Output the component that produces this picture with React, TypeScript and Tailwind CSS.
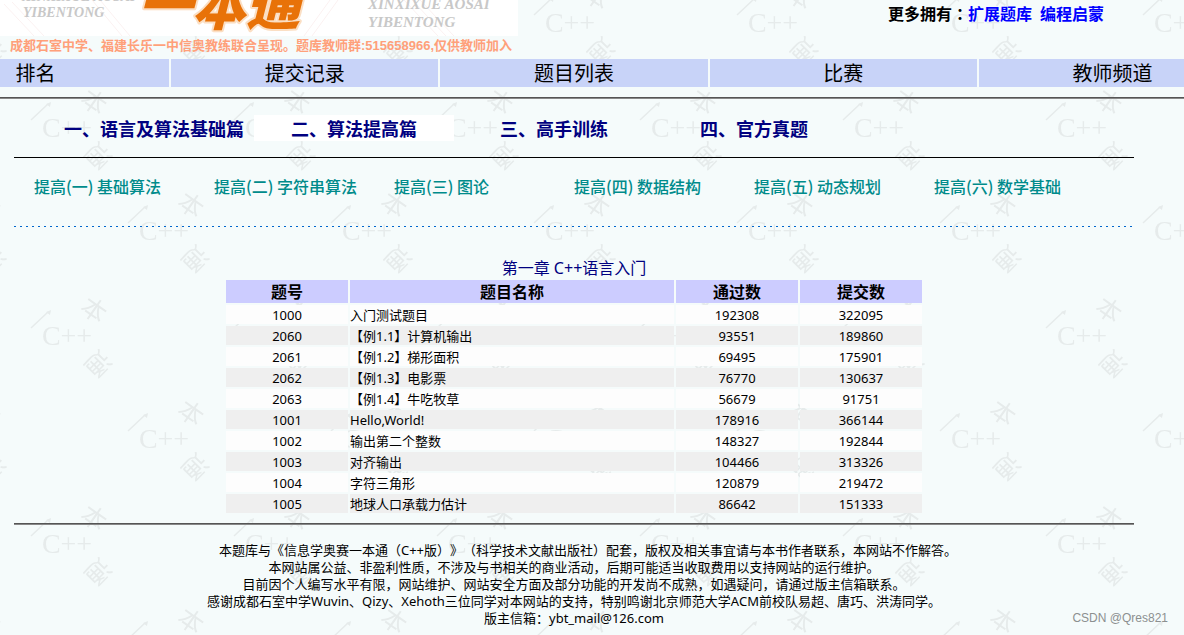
import React from 'react';

interface Problem {
  id: number;
  name: string;
  passed: number;
  submitted: number;
}

const NAV = ['排名', '提交记录', '题目列表', '比赛', '教师频道'];

const PARTS = ['一、语言及算法基础篇', '二、算法提高篇', '三、高手训练', '四、官方真题'];

const SECTIONS = [
  '提高(一) 基础算法',
  '提高(二) 字符串算法',
  '提高(三) 图论',
  '提高(四) 数据结构',
  '提高(五) 动态规划',
  '提高(六) 数学基础',
];

const PROBLEMS: Problem[] = [
  { id: 1000, name: '入门测试题目', passed: 192308, submitted: 322095 },
  { id: 2060, name: '【例1.1】计算机输出', passed: 93551, submitted: 189860 },
  { id: 2061, name: '【例1.2】梯形面积', passed: 69495, submitted: 175901 },
  { id: 2062, name: '【例1.3】电影票', passed: 76770, submitted: 130637 },
  { id: 2063, name: '【例1.4】牛吃牧草', passed: 56679, submitted: 91751 },
  { id: 1001, name: 'Hello,World!', passed: 178916, submitted: 366144 },
  { id: 1002, name: '输出第二个整数', passed: 148327, submitted: 192844 },
  { id: 1003, name: '对齐输出', passed: 104466, submitted: 313326 },
  { id: 1004, name: '字符三角形', passed: 120879, submitted: 219472 },
  { id: 1005, name: '地球人口承载力估计', passed: 86642, submitted: 151333 },
];

// One group of the tiled page background, centred on the "C++"
const Mark: React.FC<{ x: number; y: number }> = ({ x, y }) => (
  <g transform={`translate(${x} ${y})`} textAnchor="middle" fontFamily="'Noto Sans CJK SC', sans-serif">
    <path d="M-36 -8 L-19 -24" fill="none" stroke="#e6ebeb" strokeWidth="1.5" />
    <path d="M-21 -24 L-16 -26 L-17 -21 Z" />
    <text transform="translate(27 -26) rotate(35)" y="9" fontSize="25">本</text>
    <text y="9" fontSize="28" fontFamily="'Liberation Serif', serif">C++</text>
    <text transform="translate(31 28) rotate(135)" y="9" fontSize="25">通</text>
  </g>
);

const PageBackground: React.FC = () => (
  <svg className="absolute inset-0 -z-10 w-full h-full" aria-hidden="true">
    <defs>
      <pattern id="marks" width="203" height="208" patternUnits="userSpaceOnUse" fill="#e6ebeb">
        <Mark x={67} y={128} />
        <Mark x={164} y={23} />
        <Mark x={-39} y={23} />
        <Mark x={164} y={231} />
        <Mark x={-39} y={231} />
      </pattern>
    </defs>
    <rect width="100%" height="100%" fill="url(#marks)" />
  </svg>
);

const Logo: React.FC = () => (
  <svg className="block" width="518" height="36" viewBox="0 0 518 36" role="img" aria-label="一本通">
    <rect width="518" height="36" fill="#fff" />
    <g stroke="#fbf1f1" strokeWidth="1">
      <path d="M4 4 L34 36 M12 2 L44 36 M92 0 L122 36 M100 0 L130 36 M330 0 L304 36 M338 0 L312 36 M404 0 L438 36 M412 0 L446 36 M420 0 L454 36" />
    </g>
    <g fill="#c8c8c8" fontFamily="'Liberation Serif', serif" fontStyle="italic" fontWeight="700">
      <g fontSize="14">
        <text x="22" y="1">XINXIXUE AOSAI</text>
        <text x="23" y="17">YIBENTONG</text>
      </g>
      <g fontSize="15">
        <text x="368" y="9">XINXIXUE AOSAI</text>
        <text x="368" y="27">YIBENTONG</text>
      </g>
    </g>
    <text
      x="138"
      y="25"
      fontFamily="'Noto Sans CJK SC', sans-serif"
      fontSize="54"
      fontWeight="900"
      fontStyle="italic"
      fill="#e87208"
      stroke="#fbdfc4"
      strokeWidth="4"
      strokeLinejoin="round"
      paintOrder="stroke"
    >
      一本通
    </text>
  </svg>
);

const App: React.FC = () => {
  return (
    <div className="relative isolate min-h-screen overflow-hidden bg-[#f5fbfb] text-black font-['Noto_Sans','Noto_Sans_CJK_SC',sans-serif]">
      <PageBackground />

      <header className="flex justify-between items-start">
        <div>
          <Logo />
          <p className="pl-[10px] pt-px text-[13px] leading-[17px] pb-[5px] font-bold text-[#ffa07a] font-['Liberation_Sans','Noto_Sans_CJK_SC',sans-serif]">
            成都石室中学、福建长乐一中信奥教练联合呈现。题库教师群:515658966,仅供教师加入
          </p>
        </div>
        <p className="pr-20 pt-px text-base leading-6 font-bold font-['Noto_Sans_CJK_SC',sans-serif]">
          <span className="font-['Noto_Sans_CJK_TC',sans-serif]">更多拥有：</span>
          <a href="#extend" className="text-[#0000ff]">扩展题库</a>
          <a href="#start" className="ml-2 text-[#0000ff]">编程启蒙</a>
        </p>
      </header>

      <nav className="-ml-[98px] -mr-[62px] grid grid-cols-5 gap-[2px]">
        {NAV.map((item) => (
          <a key={item} href="#nav" className="pt-[2px] bg-[#c8d3f8] text-center text-xl leading-[26px]">
            {item}
          </a>
        ))}
      </nav>

      <hr className="mt-[10px] border-y border-t-[#555] border-b-[#888]" />

      <main className="ml-[14px] mr-[50px]">
        <nav className="pt-4 pb-4 pl-10 flex border-b border-black">
          {PARTS.map((part, i) => (
            <a
              key={part}
              href="#part"
              className={`w-[200px] pt-[2px] text-center text-lg leading-6 font-bold text-[#000080] ${i === 1 ? 'bg-white' : ''}`}
            >
              {part}
            </a>
          ))}
        </nav>

        <nav className="pt-4 pb-7 pl-5 flex">
          {SECTIONS.map((section) => (
            <a key={section} href="#section" className="w-[180px] text-base leading-6 font-medium text-[#008b8b] font-['Noto_Sans_CJK_SC',sans-serif]">
              {section}
            </a>
          ))}
        </nav>
        <div className="h-px bg-[repeating-linear-gradient(90deg,#0066cc_0_2px,transparent_2px_6px)]" />

        <table className="mx-auto mt-[29px] w-[700px] table-fixed border-separate border-spacing-[2px] text-[13px]">
          <caption className="pt-[2px] text-base leading-5 text-[#000080]">第一章 C++语言入门</caption>
          <colgroup>
            <col className="w-[122px]" />
            <col />
            <col className="w-[122px]" />
            <col className="w-[122px]" />
          </colgroup>
          <thead>
            <tr className="bg-[#ccccff] text-base leading-[21px]">
              <th className="p-0 pt-[2px]">题号</th>
              <th className="p-0 pt-[2px]">题目名称</th>
              <th className="p-0 pt-[2px]">通过数</th>
              <th className="p-0 pt-[2px]">提交数</th>
            </tr>
          </thead>
          <tbody className="text-center leading-[17px]">
            {PROBLEMS.map((p) => (
              <tr key={p.id} className="bg-[#fdfdfd] even:bg-[#efefef]">
                <td className="p-0 pt-[2px]">{p.id}</td>
                <td className="p-0 pt-[2px] text-left">{p.name}</td>
                <td className="p-0 pt-[2px]">{p.passed}</td>
                <td className="p-0 pt-[2px]">{p.submitted}</td>
              </tr>
            ))}
          </tbody>
        </table>

        <hr className="mt-2 border-y border-t-[#555] border-b-[#888]" />

        <footer className="pt-[17px] text-center text-[13px] leading-[17px] [text-spacing-trim:space-all]">
          <p className="indent-7">本题库与《信息学奥赛一本通（C++版）》（科学技术文献出版社）配套，版权及相关事宜请与本书作者联系，本网站不作解答。</p>
          <p>本网站属公益、非盈利性质，不涉及与书相关的商业活动，后期可能适当收取费用以支持网站的运行维护。</p>
          <p>目前因个人编写水平有限，网站维护、网站安全方面及部分功能的开发尚不成熟，如遇疑问，请通过版主信箱联系。</p>
          <p>感谢成都石室中学Wuvin、Qizy、Xehoth三位同学对本网站的支持，特别鸣谢北京师范大学ACM前校队易超、唐巧、洪涛同学。</p>
          <p>版主信箱：ybt_mail@126.com</p>
        </footer>
      </main>

      <span className="absolute bottom-2 right-4 text-xs leading-[17px] text-[#8c9090] font-['Liberation_Sans',sans-serif]">
        CSDN @Qres821
      </span>
    </div>
  );
};

export default App;
